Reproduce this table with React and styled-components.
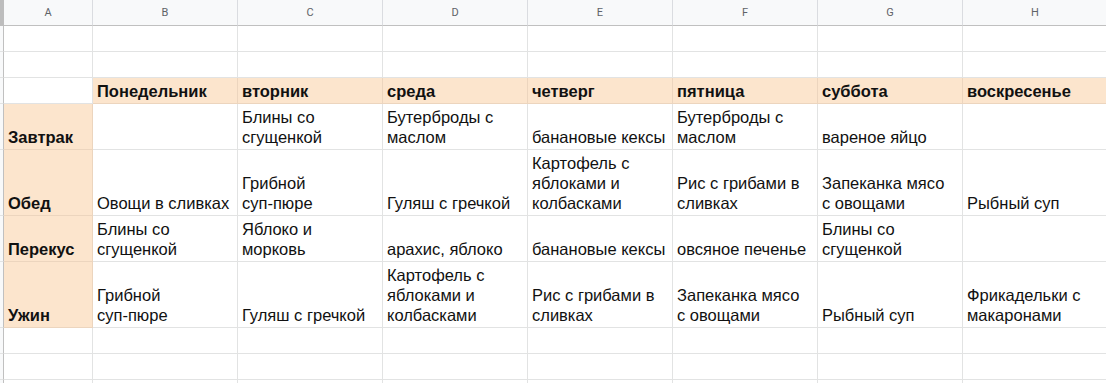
import React from 'react';
import styled, { createGlobalStyle } from 'styled-components';

const GlobalStyle = createGlobalStyle`
  html, body {
    margin: 0;
    padding: 0;
    background: #fff;
    overflow: hidden;
  }
`;

const App = () => {
  return (
    <>
      <GlobalStyle />
      <Sheet>
        <Corner />
        {columns.map((col) => (
          <ColHead key={col}>{col}</ColHead>
        ))}
        {rows.map((row, r) => (
          <React.Fragment key={r}>
            <Strip />
            {row.map((cell, c) => (
              <Cell key={c} $fill={cell.fill} $bold={cell.bold}>
                {cell.lines.map((line, i) => (
                  <Line key={i}>{line}</Line>
                ))}
              </Cell>
            ))}
          </React.Fragment>
        ))}
      </Sheet>
    </>
  );
};

export default App;

const Sheet = styled.div`
  display: grid;
  grid-template-columns: 4px 89px repeat(7, 145px);
  font-family: 'Liberation Sans', Arial, sans-serif;
`;

const Corner = styled.div`
  height: 26px;
  background: #bdbdbd;
  border-bottom: 1px solid #bdbdbd;
  box-sizing: border-box;
`;

const ColHead = styled.div`
  height: 26px;
  box-sizing: border-box;
  background: #f8f9fa;
  border-right: 1px solid #dadce0;
  border-bottom: 1px solid #c0c0c0;
  display: flex;
  align-items: center;
  justify-content: center;
  font-family: Roboto, 'Liberation Sans', sans-serif;
  font-size: 11px;
  color: #5f6368;
`;

const Strip = styled.div`
  background: #f8f9fa;
  border-right: 1px solid #c0c0c0;
  border-bottom: 1px solid #e2e3e3;
  box-sizing: border-box;
`;

const Cell = styled.div`
  min-height: 26px;
  box-sizing: border-box;
  padding: 3px 3px 2px 4px;
  display: flex;
  flex-direction: column;
  justify-content: flex-end;
  overflow: hidden;
  background: ${(p) => (p.$fill ? '#fce5cd' : '#fff')};
  border-right: 1px solid ${(p) => (p.$fill ? '#ecd5be' : '#e2e3e3')};
  border-bottom: 1px solid ${(p) => (p.$fill ? '#ecd5be' : '#e2e3e3')};
  font-size: 16.5px;
  line-height: 20px;
  font-weight: ${(p) => (p.$bold ? 700 : 400)};
  color: #111;
`;

const Line = styled.div`
  white-space: nowrap;
  flex: none;
`;

const columns = ['A', 'B', 'C', 'D', 'E', 'F', 'G', 'H'];

const t = (...lines) => ({ lines });
const head = (text) => ({ lines: text ? [text] : [], fill: true, bold: true });
const blank = () => ({ lines: [] });
const emptyRow = () => columns.map(() => blank());

const rows = [
  emptyRow(),
  emptyRow(),
  [
    blank(),
    head('Понедельник'),
    head('вторник'),
    head('среда'),
    head('четверг'),
    head('пятница'),
    head('суббота'),
    head('воскресенье'),
  ],
  [
    head('Завтрак'),
    t(),
    t('Блины со', 'сгущенкой'),
    t('Бутерброды с', 'маслом'),
    t('банановые кексы'),
    t('Бутерброды с', 'маслом'),
    t('вареное яйцо'),
    t(),
  ],
  [
    head('Обед'),
    t('Овощи в сливках'),
    t('Грибной', 'суп-пюре'),
    t('Гуляш с гречкой'),
    t('Картофель с', 'яблоками и', 'колбасками'),
    t('Рис с грибами в', 'сливках'),
    t('Запеканка мясо', 'с овощами'),
    t('Рыбный суп'),
  ],
  [
    head('Перекус'),
    t('Блины со', 'сгущенкой'),
    t('Яблоко и', 'морковь'),
    t('арахис, яблоко'),
    t('банановые кексы'),
    t('овсяное печенье'),
    t('Блины со', 'сгущенкой'),
    t(),
  ],
  [
    head('Ужин'),
    t('Грибной', 'суп-пюре'),
    t('Гуляш с гречкой'),
    t('Картофель с', 'яблоками и', 'колбасками'),
    t('Рис с грибами в', 'сливках'),
    t('Запеканка мясо', 'с овощами'),
    t('Рыбный суп'),
    t('Фрикадельки с', 'макаронами'),
  ],
  emptyRow(),
  emptyRow(),
  emptyRow(),
];
